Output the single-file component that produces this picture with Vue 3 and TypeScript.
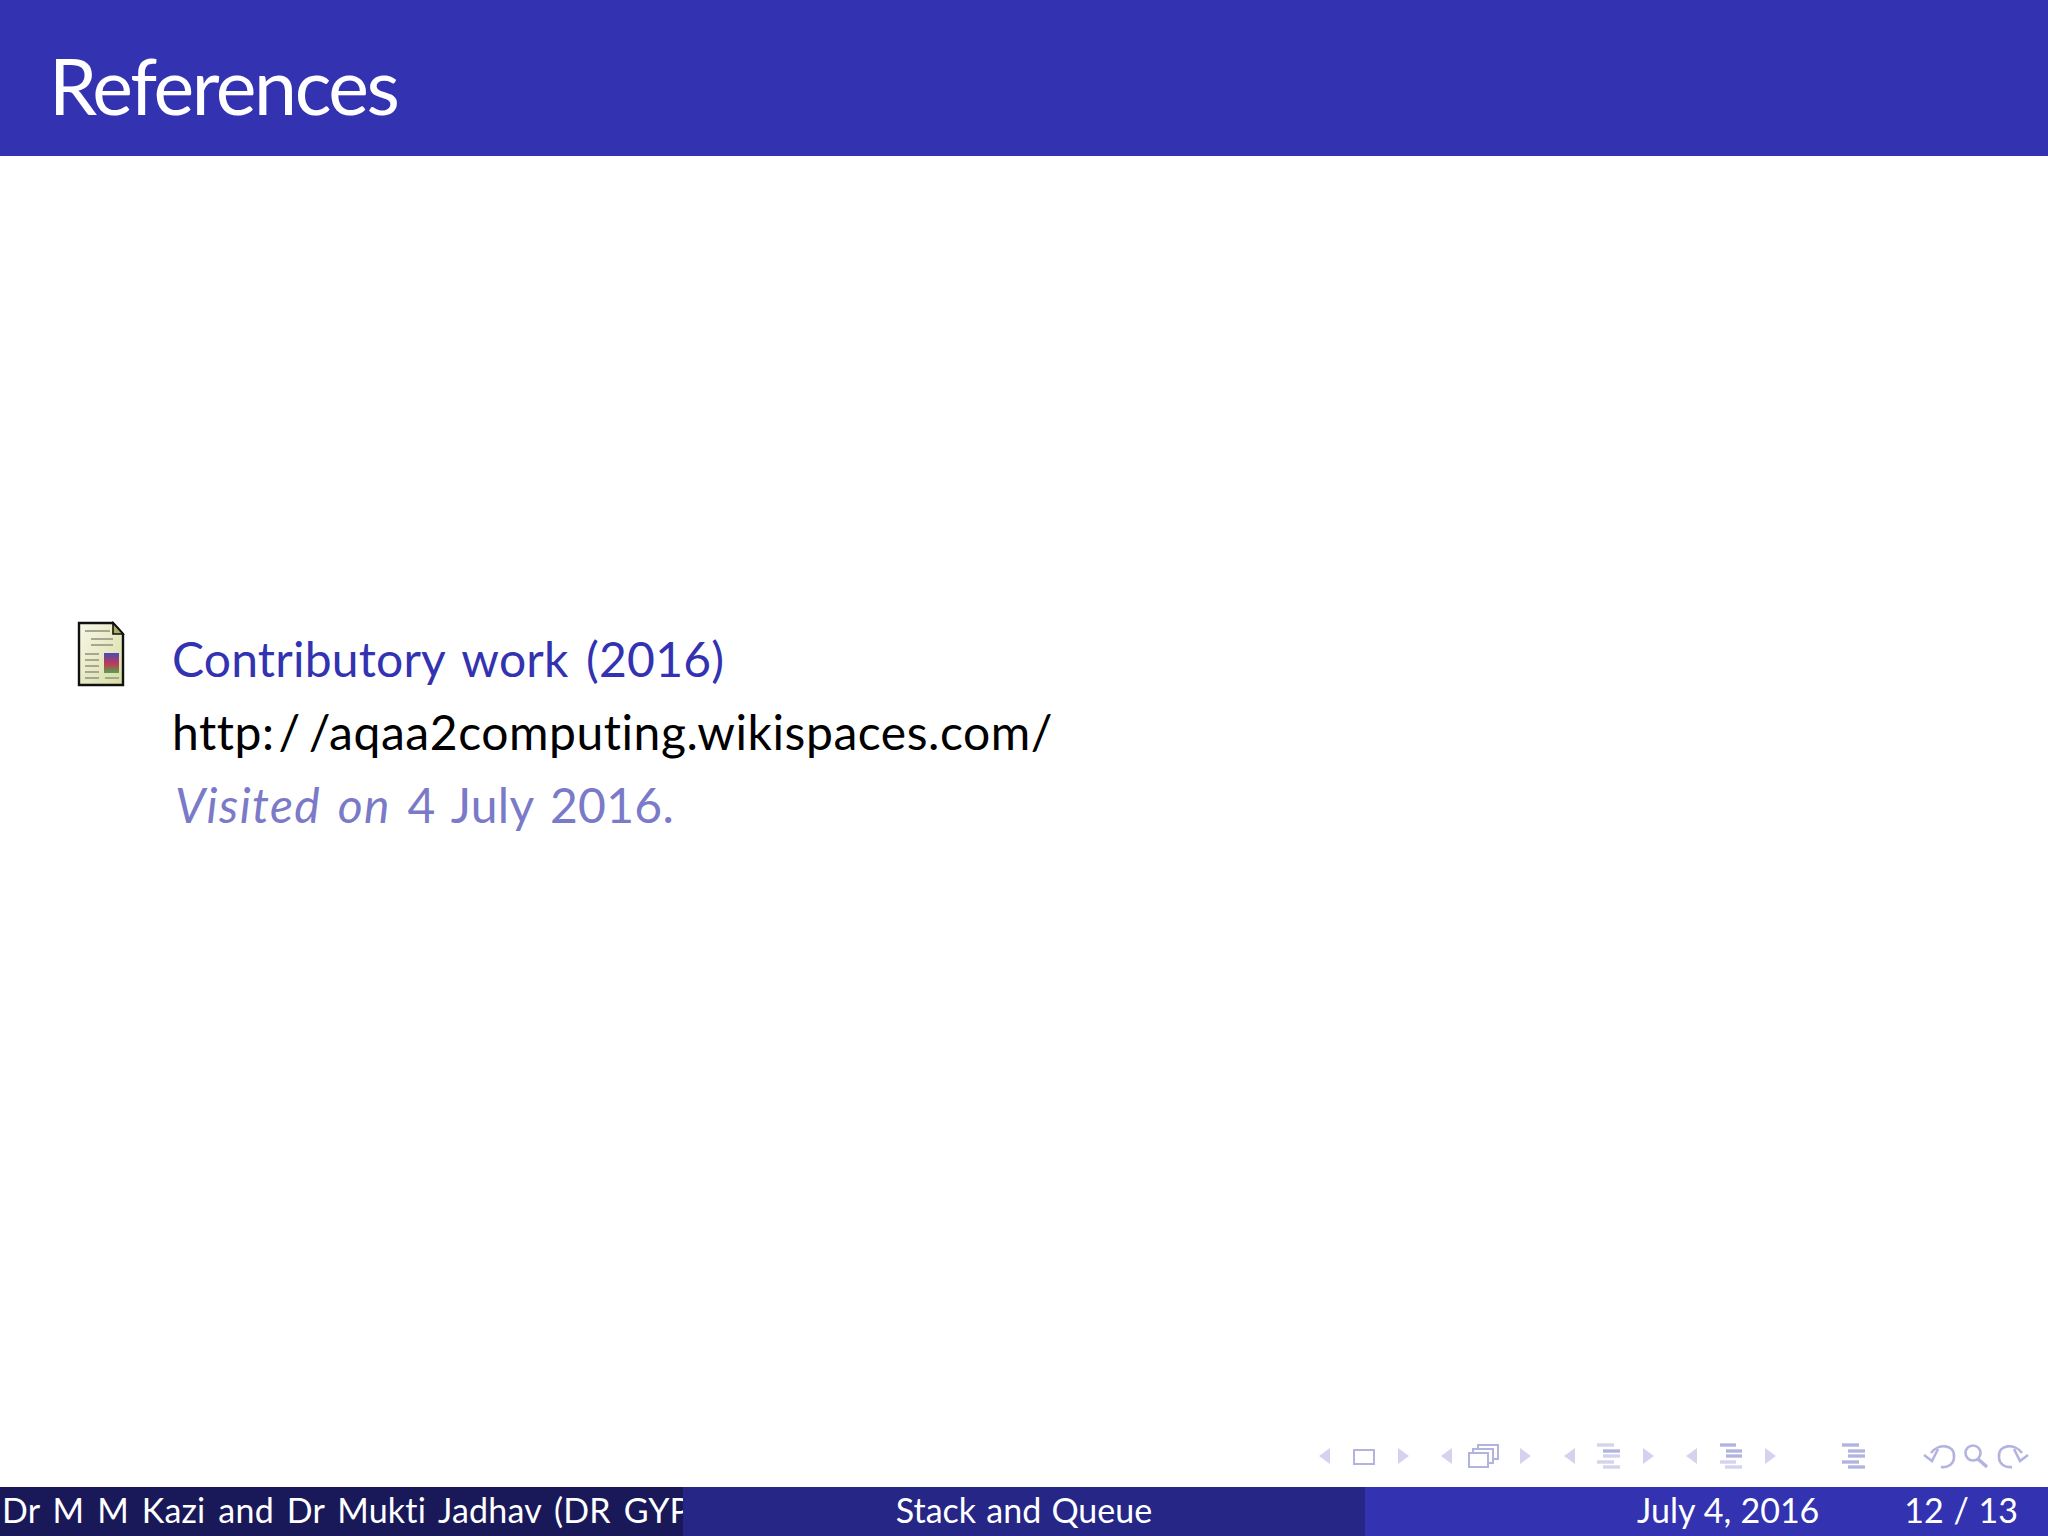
<script setup lang="ts">
const leftArrows: number[] = [1319, 1441, 1564, 1686]
const rightArrows: number[] = [1398, 1520, 1643, 1765]
const ox = 1300
const lines1: number[][] = [[1597, 1614, 1445], [1603, 1620, 1451], [1603, 1620, 1456], [1597, 1614, 1462], [1603, 1620, 1467]]
const lines2: number[][] = [[1720, 1736, 1445], [1726, 1742, 1451], [1726, 1742, 1456], [1720, 1736, 1462], [1725, 1742, 1467]]
const lines3: number[][] = [[1842, 1859, 1445], [1848, 1865, 1451], [1848, 1865, 1456], [1842, 1859, 1462], [1848, 1865, 1467]]
</script>

<template>
  <div class="slide">
    <header class="title-bar"><h1>References</h1></header>
    <main class="content">
      <div class="entry">
        <svg class="doc" width="48" height="66" viewBox="0 0 48 66">
          <defs>
            <linearGradient id="paper" x1="0" y1="0" x2="1" y2="1">
              <stop offset="0" stop-color="#f8f8ea" />
              <stop offset="1" stop-color="#d8dca0" />
            </linearGradient>
            <linearGradient id="chart" x1="0" y1="0" x2="0" y2="1">
              <stop offset="0" stop-color="#4a4ab8" />
              <stop offset="0.55" stop-color="#c03a55" />
              <stop offset="1" stop-color="#4fa650" />
            </linearGradient>
          </defs>
          <path d="M2 2H36L46 13V64H2Z" fill="url(#paper)" stroke="#111" stroke-width="2.4" />
          <path d="M36 2V13H46Z" fill="#a9b060" stroke="#111" stroke-width="1.6" />
          <g stroke="#a5a795" stroke-width="2">
            <path d="M8 10H33M14 18H36M14 24H36M8 33H22M8 39H22M8 45H22M8 51H22M8 57H22M28 57H42" />
          </g>
          <rect x="27" y="32" width="15" height="20" fill="url(#chart)" />
        </svg>
        <div class="citation">
          <span class="author">Contributory work (2016)</span>
          <span class="url">http:<span class="slash-a">/</span><span class="slash-b">/</span>aqaa2computing.wikispaces.com/</span>
          <span class="note"><em>Visited on</em> 4 July 2016.</span>
        </div>
      </div>
    </main>
    <nav class="nav-strip">
      <svg width="748" height="50" :viewBox="`${ox} 1437 748 50`">
        <path v-for="x in leftArrows" :key="x" :d="`M${x} 1456L${x + 11} 1448V1464Z`" fill="#d3d3ee" />
        <path v-for="x in rightArrows" :key="x" :d="`M${x + 11} 1456L${x} 1448V1464Z`" fill="#d3d3ee" />
        <g fill="none" stroke="#b3b3e0" stroke-width="2">
          <rect x="1354" y="1450" width="20" height="14" />
          <path d="M1478 1449V1445H1498V1459H1493M1473 1453V1449H1493V1463H1488" fill="none" />
          <rect x="1469" y="1453" width="19" height="14" fill="#fff" />
        </g>
        <g stroke-width="3.4">
          <path v-for="(l, i) in lines1" :key="i" :d="`M${l[0]} ${l[2]}H${l[1]}`" :stroke="i === 1 ? '#b3b3e0' : '#d3d3ee'" />
          <path v-for="(l, i) in lines2" :key="i" :d="`M${l[0]} ${l[2]}H${l[1]}`" :stroke="i < 3 ? '#b3b3e0' : '#d3d3ee'" />
          <path v-for="(l, i) in lines3" :key="i" :d="`M${l[0]} ${l[2]}H${l[1]}`" stroke="#b3b3e0" />
        </g>
        <g fill="none" stroke="#b3b3e0" stroke-width="2.6">
          <path d="M1931 1453C1938 1443 1955 1444 1954 1457C1954 1464 1948 1468 1941 1467" />
          <path d="M1924 1455L1932 1461L1938 1449" />
          <circle cx="1973" cy="1453" r="7.5" />
          <path d="M1978 1459L1987 1467" stroke-width="3.4" />
          <path d="M2022 1453C2015 1443 1998 1444 1999 1457C1999 1464 2005 1468 2012 1467" />
          <path d="M2028 1455L2020 1461L2014 1449" />
        </g>
      </svg>
    </nav>
    <footer class="foot">
      <div class="seg seg-a"><span>Dr M M Kazi and Dr Mukti Jadhav (DR GYPC)</span></div>
      <div class="seg seg-b">Stack and Queue</div>
      <div class="seg seg-c"><span class="date">July 4, 2016</span><span class="page">12 / 13</span></div>
    </footer>
  </div>
</template>

<style>
html, body { margin: 0; background: #fff; }
</style>

<style scoped>
.slide {
  width: 2048px;
  height: 1536px;
  display: flex;
  flex-direction: column;
  overflow: hidden;
  font-family: Lato, "Open Sans", sans-serif;
  font-variant-ligatures: none;
}
.title-bar {
  height: 156px;
  background: #3333b2;
  color: #fff;
  display: flex;
  align-items: center;
  padding-left: 49px;
  box-sizing: border-box;
  flex: none;
}
.title-bar h1 {
  margin: 0;
  font-size: 77px;
  font-weight: 400;
  letter-spacing: -2.4px;
  line-height: 1;
  position: relative;
  top: 7px;
}
.content {
  flex: 1;
  display: flex;
  flex-direction: column;
  justify-content: center;
  padding-bottom: 130px;
  box-sizing: border-box;
}
.entry {
  display: flex;
  align-items: flex-start;
  padding-left: 77px;
  gap: 47px;
}
.doc { flex: none; margin-top: -1px; }
.citation {
  display: flex;
  flex-direction: column;
  font-size: 48px;
  line-height: 73px;
  word-spacing: 5px;
}
.author { color: #3333b2; letter-spacing: 0.2px; }
.url { color: #000; letter-spacing: 0.55px; }
.slash-a { margin-left: 4px; }
.slash-b { margin-left: 8px; }
.note { color: #7a7ac8; padding-left: 3px; word-spacing: 4px; letter-spacing: 0.3px; }
.note em { letter-spacing: 1.4px; }
.nav-strip {
  height: 50px;
  flex: none;
  display: flex;
  justify-content: flex-end;
}
.foot {
  height: 49px;
  flex: none;
  display: flex;
  color: #fff;
  font-size: 34px;
  line-height: 46px;
  word-spacing: 1.5px;
}
.seg { height: 100%; white-space: nowrap; overflow: hidden; box-sizing: border-box; }
.seg-a { width: 683px; background: #191959; padding-left: 2px; word-spacing: 4px; letter-spacing: 0.2px; }
.seg-b { width: 682px; background: #262686; text-align: center; }
.seg-c {
  flex: 1;
  background: #3333b2;
  display: flex;
  justify-content: flex-end;
  gap: 85px;
  padding-right: 30px;
}
.date { word-spacing: 0.5px; }
.page { word-spacing: 1px; }
</style>
